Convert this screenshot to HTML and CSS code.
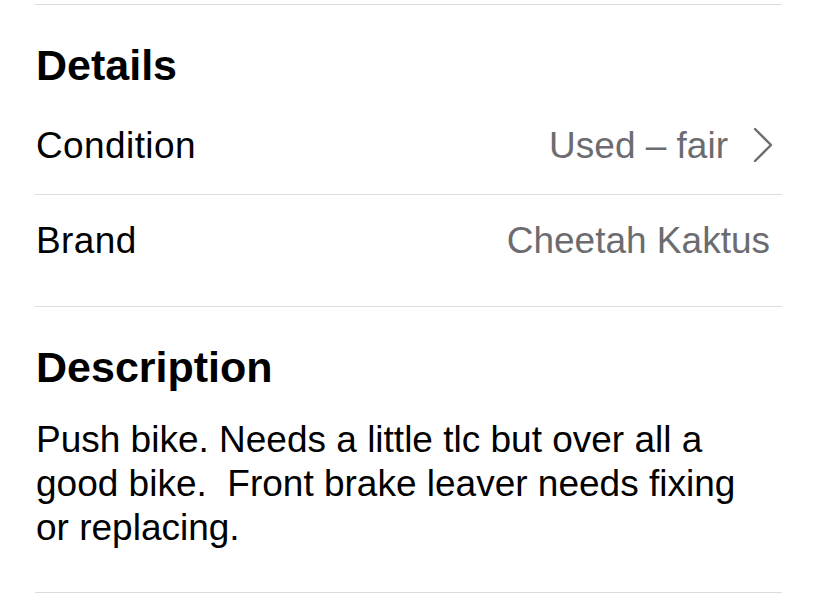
FILE: index.html
```html
<!DOCTYPE html>
<html lang="en">
<head>
    <meta charset="UTF-8">
    <meta name="viewport" content="width=device-width, initial-scale=1.0">
    <title>Listing Details</title>
    <link rel="stylesheet" href="styles.css">
</head>
<body>

<main class="listing">
    <section class="listing-section">
        <h2 class="section-title">Details</h2>
        <div class="detail-row">
            <span class="detail-label">Condition</span>
            <a href="#" class="detail-value detail-link">
                Used – fair
                <svg class="chevron" width="20" height="36" viewBox="0 0 20 36" aria-hidden="true">
                    <path d="M2 2 L18 18 L2 34" fill="none" stroke="currentColor" stroke-width="2.4" stroke-linecap="round" stroke-linejoin="round"/>
                </svg>
            </a>
        </div>
        <div class="detail-row detail-row-last">
            <span class="detail-label">Brand</span>
            <span class="detail-value">Cheetah Kaktus</span>
        </div>
    </section>

    <section class="listing-section">
        <h2 class="section-title">Description</h2>
        <p class="description">Push bike. Needs a little tlc but over all a good bike.&nbsp; Front brake leaver needs fixing or replacing.</p>
    </section>
</main>

</body>
</html>
```

FILE: styles.css
```css
/* Basic Reset */
*,
*::before,
*::after {
    box-sizing: border-box;
    margin: 0;
    padding: 0;
}

:root {
    --text-main: #000000;
    --text-muted: #6c6c70;
    --divider: #dcdcde;
}

html, body {
    background-color: #ffffff;
    color: var(--text-main);
    font-family: "Liberation Sans", Arial, sans-serif;
}

.listing {
    padding: 4px 34px 0 35px;
}

.listing-section {
    border-top: 1px solid var(--divider);
}

.listing-section:last-child {
    border-bottom: 1px solid var(--divider);
}

.section-title {
    font-size: 43px;
    font-weight: 700;
    line-height: 48px;
    margin-top: 36px;
    margin-bottom: 11px;
    padding-left: 1px;
}

/* Key / value rows */
.detail-row {
    display: flex;
    align-items: center;
    justify-content: space-between;
    padding: 24px 12px 26px 1px;
    font-size: 37px;
    line-height: 44px;
    border-bottom: 1px solid var(--divider);
}

.detail-row-last {
    padding-bottom: 43px;
    border-bottom: none;
}

.detail-label {
    letter-spacing: 0.4px;
}

.detail-value {
    color: var(--text-muted);
    text-decoration: none;
}

.detail-link {
    display: flex;
    align-items: center;
}

.chevron {
    margin-left: 25px;
    margin-right: -3px;
    margin-top: -2px;
}

.description {
    font-size: 37px;
    line-height: 44px;
    margin-top: 27px;
    padding: 0 40px 42px 1px;
}
```
